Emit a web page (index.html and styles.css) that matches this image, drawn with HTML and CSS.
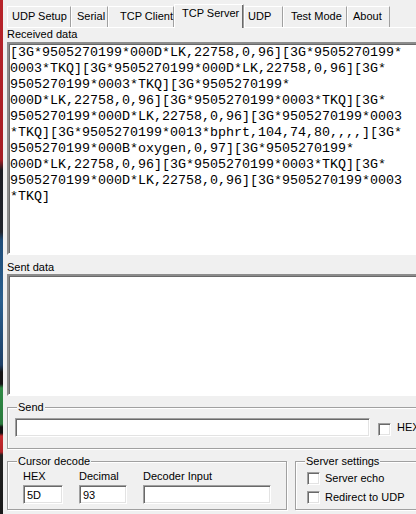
FILE: index.html
```html
<!DOCTYPE html>
<html lang="en">
<head>
    <meta charset="UTF-8">
    <meta name="viewport" content="width=device-width, initial-scale=1.0">
    <title>TCP Server</title>
    <link rel="stylesheet" href="styles.css">
</head>
<body>
    <div class="desktop"></div>
    <div class="window">
        <div class="tabs">
            <div class="tab">UDP Setup</div>
            <div class="tab">Serial</div>
            <div class="tab">TCP Client</div>
            <div class="tab active">TCP Server</div>
            <div class="tab">UDP</div>
            <div class="tab">Test Mode</div>
            <div class="tab">About</div>
        </div>
        <div class="panel">
            <div class="label">Received data</div>
            <div class="textbox received">[3G*9505270199*000D*LK,22758,0,96][3G*9505270199*
0003*TKQ][3G*9505270199*000D*LK,22758,0,96][3G*
9505270199*0003*TKQ][3G*9505270199*
000D*LK,22758,0,96][3G*9505270199*0003*TKQ][3G*
9505270199*000D*LK,22758,0,96][3G*9505270199*0003
*TKQ][3G*9505270199*0013*bphrt,104,74,80,,,,][3G*
9505270199*000B*oxygen,0,97][3G*9505270199*
000D*LK,22758,0,96][3G*9505270199*0003*TKQ][3G*
9505270199*000D*LK,22758,0,96][3G*9505270199*0003
*TKQ]</div>
            <div class="label sent-label">Sent data</div>
            <div class="textbox sent"></div>

            <fieldset class="group send-group">
                <legend>Send</legend>
                <div class="send-row">
                    <div class="field send-input"></div>
                    <span class="check"></span>
                    <span>HEX</span>
                </div>
            </fieldset>

            <div class="bottom-row">
                <fieldset class="group decode-group">
                    <legend>Cursor decode</legend>
                    <div class="decode-row">
                        <div class="decode-col">
                            <div class="small-label">HEX</div>
                            <div class="field hex-input">5D</div>
                        </div>
                        <div class="decode-col">
                            <div class="small-label">Decimal</div>
                            <div class="field dec-input">93</div>
                        </div>
                        <div class="decode-col">
                            <div class="small-label">Decoder Input</div>
                            <div class="field decoder-input"></div>
                        </div>
                    </div>
                </fieldset>
                <fieldset class="group server-group">
                    <legend>Server settings</legend>
                    <div class="option"><span class="check"></span>Server echo</div>
                    <div class="option"><span class="check"></span>Redirect to UDP</div>
                </fieldset>
            </div>
        </div>
    </div>
</body>
</html>
```

FILE: styles.css
```css
body {
    margin: 0;
    height: 514px;
    display: flex;
    overflow: hidden;
    font-family: "Liberation Sans", Arial, sans-serif;
    font-size: 11px;
    line-height: 13px;
    color: #000;
    background-color: #f0f0f0;
}

.desktop {
    width: 3px;
    flex-shrink: 0;
    background: linear-gradient(to bottom,
        #b8232a 0, #a51d24 160px,
        #1c1c22 170px, #20242c 232px,
        #1e4c78 240px, #2a5f8e 300px, #1d3f66 365px,
        #141414 372px, #141414 384px,
        #2f8a45 388px, #2b7a3d 424px,
        #111 427px, #111 433px,
        #c52a2e 436px, #b22328 452px,
        #222 455px, #1a1a1a 514px);
}

.window {
    flex: 1;
    min-width: 0;
    padding-left: 4px;
    overflow: hidden;
}

.tabs {
    display: flex;
    align-items: flex-start;
    margin-top: 6px;
    height: 21px;
}

.tab {
    box-sizing: border-box;
    height: 21px;
    padding: 3px 0 0 5px;
    border-top: 1px solid #fff;
    border-left: 1px solid #fff;
    border-right: 1px solid #a0a0a0;
    white-space: nowrap;
    flex-shrink: 0;
}

.tab:nth-child(1) { width: 64px; padding-left: 4px; }
.tab:nth-child(2) { width: 37px; padding-left: 5px; }
.tab:nth-child(3) { width: 66px; padding-left: 11px; }
.tab:nth-child(4) { width: 70px; padding-left: 7px; }
.tab:nth-child(5) { width: 39px; padding-left: 3px; }
.tab:nth-child(6) { width: 64px; padding-left: 7px; }
.tab:nth-child(7) { width: 43px; padding-left: 5px; }

.tab.active {
    position: relative;
    z-index: 1;
    height: 24px;
    margin-top: -2px;
    padding-top: 2px;
    background-color: #f0f0f0;
    box-shadow: inset -1px 0 #696969;
}

.panel {
    border-top: 1px solid #fff;
    width: 440px;
}

.label {
    height: 14px;
}

.sent-label {
    margin-top: 6px;
    height: 13px;
}

.textbox {
    box-sizing: border-box;
    background-color: #fff;
    border: 2px solid;
    border-color: #8c8c8c #fff #fff #8c8c8c;
    box-shadow: inset 1px 1px #696969;
    padding: 1px 0 0 1px;
    font-family: "Liberation Mono", "Courier New", monospace;
    font-size: 13.33px;
    line-height: 16px;
    white-space: pre;
    overflow: hidden;
}

.received {
    height: 213px;
}

.sent {
    height: 122px;
}

.group {
    margin: 0;
    border: 1px solid #a0a0a0;
    box-shadow: inset 1px 1px #fff, 1px 1px #fff;
    min-width: 0;
}

.group legend {
    padding: 0 1px;
    margin-left: 2px;
    line-height: 13px;
    background-color: #f0f0f0;
}

.send-group {
    margin-top: 5px;
    padding: 4px 0 11px 7px;
}

.send-row {
    display: flex;
    align-items: center;
    margin-left: 0;
}

.field {
    box-sizing: border-box;
    height: 19px;
    background-color: #fff;
    border: 1px solid;
    border-color: #a0a0a0 #fff #fff #a0a0a0;
    box-shadow: inset 1px 1px #696969, inset -1px -1px #e3e3e3;
    padding: 3px 0 0 3px;
}

.send-input {
    width: 355px;
}

.check {
    box-sizing: border-box;
    display: inline-block;
    width: 13px;
    height: 13px;
    background-color: #fff;
    border: 1px solid;
    border-color: #a0a0a0 #fff #fff #a0a0a0;
    box-shadow: inset 1px 1px #696969, inset -1px -1px #e3e3e3;
    flex-shrink: 0;
}

.send-row .check {
    margin: 3px 6px 0 8px;
}

.bottom-row {
    display: flex;
    align-items: stretch;
    gap: 8px;
    margin-top: 6px;
}

.decode-group {
    box-sizing: border-box;
    width: 280px;
    flex-shrink: 0;
    padding: 2px 0 5px 7px;
}

.decode-row {
    display: flex;
    gap: 16px;
    margin-left: 8px;
}

.small-label {
    margin-bottom: 2px;
}

.hex-input { width: 40px; }
.dec-input { width: 48px; }
.decoder-input { width: 128px; }

.server-group {
    flex: 1;
    padding: 1px 0 0 7px;
}

.option {
    display: flex;
    align-items: center;
    gap: 5px;
    height: 19px;
    margin-left: 4px;
    white-space: nowrap;
}
```
